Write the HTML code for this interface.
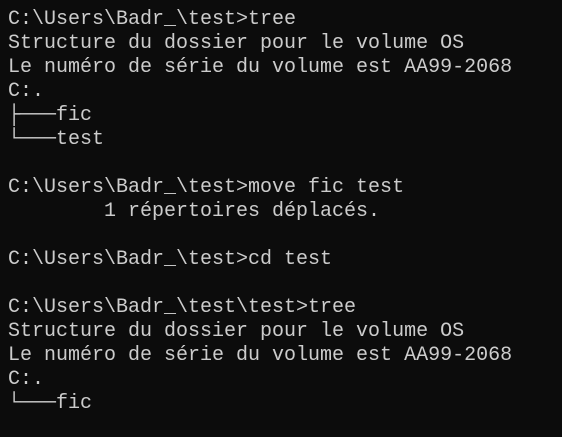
<!DOCTYPE html>
<html><head><meta charset="utf-8"><style>
html,body{margin:0;padding:0;background:#0c0c0c;width:562px;height:437px;overflow:hidden}
pre{margin:0;position:absolute;left:8px;top:8px;color:#cccccc;font-family:"Liberation Mono","DejaVu Sans Mono",monospace;font-size:20px;line-height:24px}
</style></head><body><pre>C:\Users\Badr_\test&gt;tree
Structure du dossier pour le volume OS
Le numéro de série du volume est AA99-2068
C:.
├───fic
└───test

C:\Users\Badr_\test&gt;move fic test
        1 répertoires déplacés.

C:\Users\Badr_\test&gt;cd test

C:\Users\Badr_\test\test&gt;tree
Structure du dossier pour le volume OS
Le numéro de série du volume est AA99-2068
C:.
└───fic
</pre></body></html>
